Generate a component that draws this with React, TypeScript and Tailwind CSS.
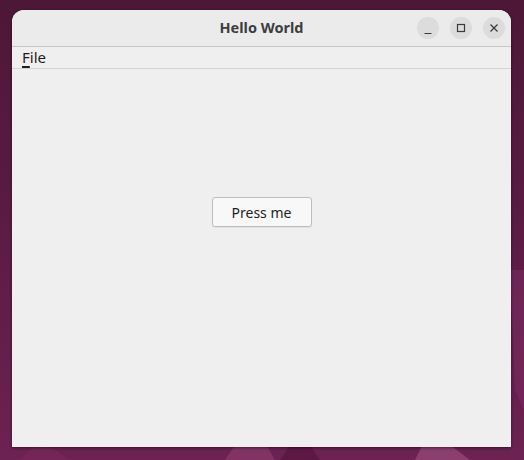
import React from 'react';

const font = { fontFamily: '"Noto Sans", "DejaVu Sans", sans-serif' };

const WinButton = ({ children }: { children: React.ReactNode }) => (
  <div className="w-[22px] h-[22px] rounded-full bg-[#dcdcdc] flex items-center justify-center text-[#3a3a3a]">
    {children}
  </div>
);

export default function App() {
  return (
    <div
      className="relative w-[524px] h-[460px] overflow-hidden pt-[10px] pl-[12px] bg-[linear-gradient(180deg,#4d1737_0%,#5a1b42_45%,#6c2252_100%)]"
      style={font}
    >
      {/* wallpaper shapes */}
      <svg className="absolute left-0 bottom-0" width="524" height="190" viewBox="0 0 524 190">
        <polygon points="225,190 275,190 252,150" fill="#8a3a6e" opacity="0.7" />
        <polygon points="280,190 320,190 300,160" fill="#5a1640" opacity="0.8" />
        <polygon points="415,190 470,190 430,160" fill="#9a4a7e" opacity="0.7" />
        <polygon points="510,0 524,0 524,140 515,120" fill="#7a2a62" opacity="0.6" />
        <polygon points="20,190 70,190 40,170" fill="#7a2a5c" opacity="0.5" />
      </svg>
      <div className="relative w-[499px] h-[437px] rounded-t-[12px] overflow-hidden flex flex-col bg-[#efefef] shadow-[0_1px_3px_rgba(0,0,0,0.5)]">
        {/* Title bar */}
        <div className="relative h-[37px] shrink-0 bg-[#ebebeb] border-b border-[#c6c6c6] flex items-center justify-end pr-[6px] gap-[11px]">
          <span className="absolute inset-0 flex items-center justify-center text-[14.5px] font-bold text-[#3d3d3d] pb-[1px]">
            Hello World
          </span>
          <WinButton>
            <svg width="10" height="10" viewBox="0 0 10 10" className="mt-[3px]">
              <path d="M1.5 8.5h7" stroke="currentColor" strokeWidth="1.2" />
            </svg>
          </WinButton>
          <WinButton>
            <svg width="10" height="10" viewBox="0 0 10 10">
              <rect x="1.5" y="1.5" width="7" height="7" fill="none" stroke="currentColor" strokeWidth="1.2" />
            </svg>
          </WinButton>
          <WinButton>
            <svg width="10" height="10" viewBox="0 0 10 10">
              <path d="M1.5 1.5l7 7M8.5 1.5l-7 7" stroke="currentColor" strokeWidth="1.2" />
            </svg>
          </WinButton>
        </div>

        {/* Menu bar */}
        <div className="h-[22px] shrink-0 bg-[#efefef] border-b border-[#d4d4d4] flex items-center pl-[10px] text-[15px] text-[#1e1e1e]">
          <span>
            <span className="underline decoration-[1.5px] underline-offset-[3px]">F</span>ile
          </span>
        </div>

        {/* Content */}
        <div className="flex-1 flex justify-center pt-[128px]">
          <button className="w-[100px] h-[30px] rounded-[3px] border border-[#bdbdbd] bg-[#f8f8f8] text-[14px] text-[#1e1e1e] shadow-[0_1px_0_rgba(0,0,0,0.05)]">
            Press me
          </button>
        </div>
      </div>
    </div>
  );
}
